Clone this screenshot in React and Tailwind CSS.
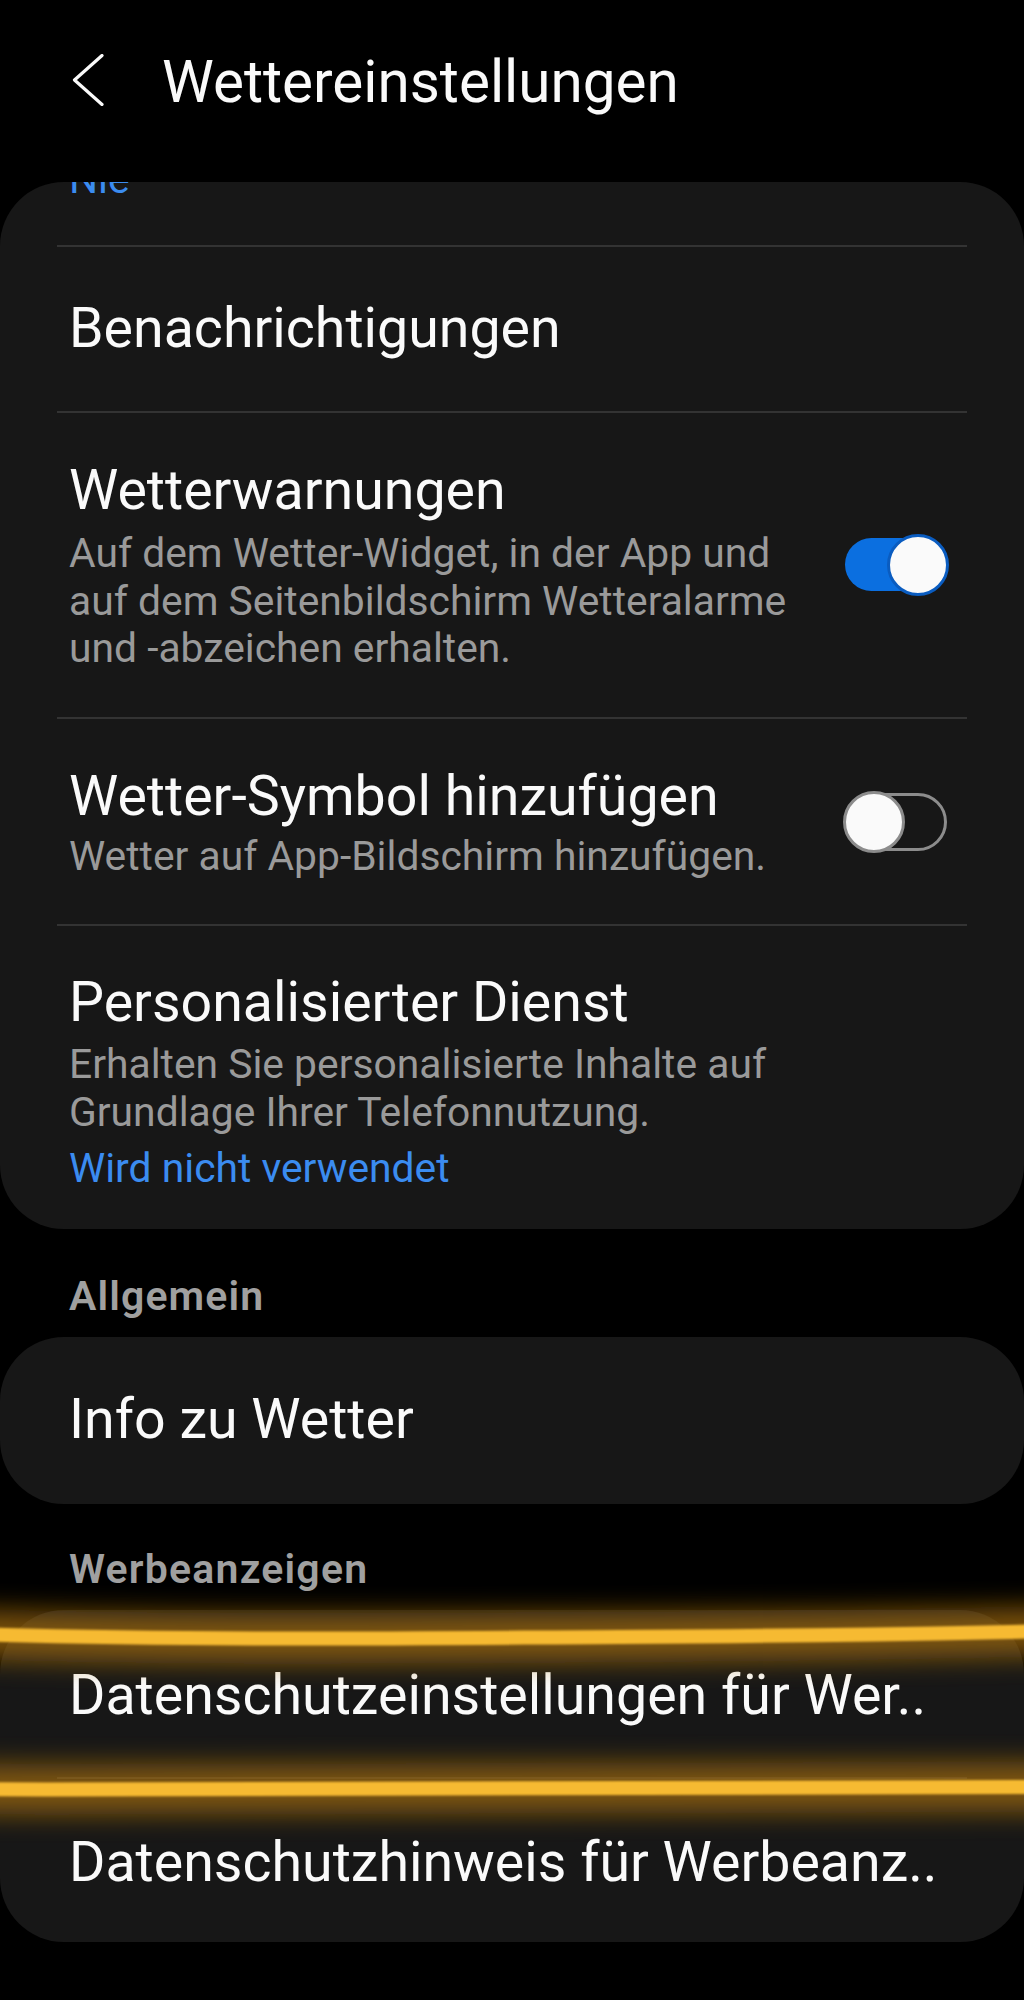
import React from "react";

function Divider() {
  return <div className="mx-[57px] h-[2px] bg-[#333333]" />;
}

function Toggle({ on }) {
  if (on) {
    return (
      <div className="relative h-[62px] w-[106px] shrink-0">
        <div className="absolute bottom-[5px] left-[2px] right-[6px] top-[4px] rounded-full bg-[#0b6fe0]" />
        <div className="absolute right-0 top-0 h-[62px] w-[62px] rounded-full border-[3px] border-[#0a5cc0] bg-[#fafafa]" />
      </div>
    );
  }
  return (
    <div className="relative h-[62px] w-[106px] shrink-0">
      <div className="absolute bottom-[2px] left-[2px] right-[2px] top-[2px] rounded-full border-[3px] border-[#8c8c8c]" />
      <div className="absolute left-0 top-0 h-[62px] w-[62px] rounded-full border-[3px] border-[#8c8c8c] bg-[#fafafa]" />
    </div>
  );
}

function SwitchRow({ title, lines, on, gap }) {
  return (
    <div className="flex items-center pb-[44px] pl-[69px] pr-[75px] pt-[45px]">
      <div className="flex-1">
        <div className="text-[55.5px] leading-[66px] text-[#fafafa]">{title}</div>
        <div
          className={
            (gap === 6 ? "mt-[6px] " : "mt-[3px] ") +
            "whitespace-nowrap text-[40.8px] leading-[47.5px] text-[#9a9a9a]"
          }
        >
          {lines.map((l) => (
            <div key={l}>{l}</div>
          ))}
        </div>
      </div>
      <Toggle on={on} />
    </div>
  );
}

export default function App() {
  return (
    <div className="relative min-h-[2000px] w-[1024px] bg-black font-['Roboto','Liberation_Sans',sans-serif] antialiased">
      {/* Header */}
      <div className="flex h-[182px] items-start pl-[72px] pt-[48px]">
        <svg width="32" height="52" viewBox="0 0 32 52" className="mt-[6px] shrink-0">
          <path
            d="M30 1.5 L2.5 26 L30 50.5"
            fill="none"
            stroke="#fafafa"
            strokeWidth="3.2"
            strokeLinecap="round"
            strokeLinejoin="round"
          />
        </svg>
        <h1 className="ml-[58px] text-[58.4px] leading-[69px] text-[#fafafa]">Wettereinstellungen</h1>
      </div>

      {/* Main settings card */}
      <div className="overflow-hidden rounded-[64px] bg-[#171717]">
        <div className="-mt-[27px] pb-[42px] pl-[69px] text-[40.8px] leading-[48px] text-[#3b8cf0]">Nie</div>
        <Divider />
        <div className="py-[49px] pl-[69px] text-[55.5px] leading-[66px] text-[#fafafa]">Benachrichtigungen</div>
        <Divider />
        <SwitchRow
          title="Wetterwarnungen"
          lines={[
            "Auf dem Wetter-Widget, in der App und",
            "auf dem Seitenbildschirm Wetteralarme",
            "und -abzeichen erhalten.",
          ]}
          on
          gap={6}
        />
        <Divider />
        <SwitchRow
          title="Wetter-Symbol hinzufügen"
          lines={["Wetter auf App-Bildschirm hinzufügen."]}
          on={false}
          gap={3}
        />
        <Divider />
        <div className="pb-[37px] pl-[69px] pt-[44px]">
          <div className="text-[55.5px] leading-[66px] text-[#fafafa]">Personalisierter Dienst</div>
          <div className="mt-[5px] text-[40.8px] leading-[47.5px] text-[#9a9a9a]">
            <div>Erhalten Sie personalisierte Inhalte auf</div>
            <div>Grundlage Ihrer Telefonnutzung.</div>
          </div>
          <div className="mt-[8px] text-[40.8px] leading-[48px] text-[#3b8cf0]">Wird nicht verwendet</div>
        </div>
      </div>

      {/* Allgemein */}
      <div className="mt-[43px] pl-[69px] text-[41px] font-semibold leading-[48px] tracking-[1.1px] text-[#a0a0a0]">
        Allgemein
      </div>
      <div className="mt-[17px] rounded-[64px] bg-[#171717]">
        <div className="pb-[51px] pl-[69px] pt-[50px] text-[55.5px] leading-[66px] text-[#fafafa]">Info zu Wetter</div>
      </div>

      {/* Werbeanzeigen */}
      <div className="mt-[41px] pl-[69px] text-[41px] font-semibold leading-[48px] tracking-[1.2px] text-[#a0a0a0]">
        Werbeanzeigen
      </div>
      <div className="mt-[17px] rounded-[64px] bg-[#171717]">
        <div className="whitespace-nowrap pb-[48px] pl-[69px] pt-[53px] text-[55.5px] leading-[66px] text-[#fafafa]">
          Datenschutzeinstellungen für Wer..
        </div>
        <Divider />
        <div className="whitespace-nowrap pb-[46px] pl-[69px] pt-[51px] text-[55.5px] leading-[66px] text-[#fafafa]">
          Datenschutzhinweis für Werbeanz..
        </div>
      </div>

      {/* marker highlight strokes */}
      <svg className="pointer-events-none absolute left-0 top-0" width="1024" height="2000">
        <defs>
          <filter id="glow" x="-10%" y="-300%" width="120%" height="700%">
            <feGaussianBlur stdDeviation="13" />
          </filter>
          <filter id="soft" x="-10%" y="-300%" width="120%" height="700%">
            <feGaussianBlur stdDeviation="1.3" />
          </filter>
        </defs>
        <g filter="url(#glow)" opacity="0.7" fill="none" stroke="#a86f10" strokeWidth="50">
          <path d="M-30 1634 C 200 1641, 420 1638, 620 1637 S 900 1634, 1060 1631" />
          <path d="M-30 1789 C 300 1791, 620 1789, 1060 1787" />
        </g>
        <g filter="url(#soft)" fill="none" stroke="#f6ba33" strokeWidth="14" strokeLinecap="round">
          <path d="M-30 1634 C 200 1641, 420 1638, 620 1637 S 900 1634, 1060 1631" />
          <path d="M-30 1789 C 300 1791, 620 1789, 1060 1787" />
        </g>
      </svg>
    </div>
  );
}
